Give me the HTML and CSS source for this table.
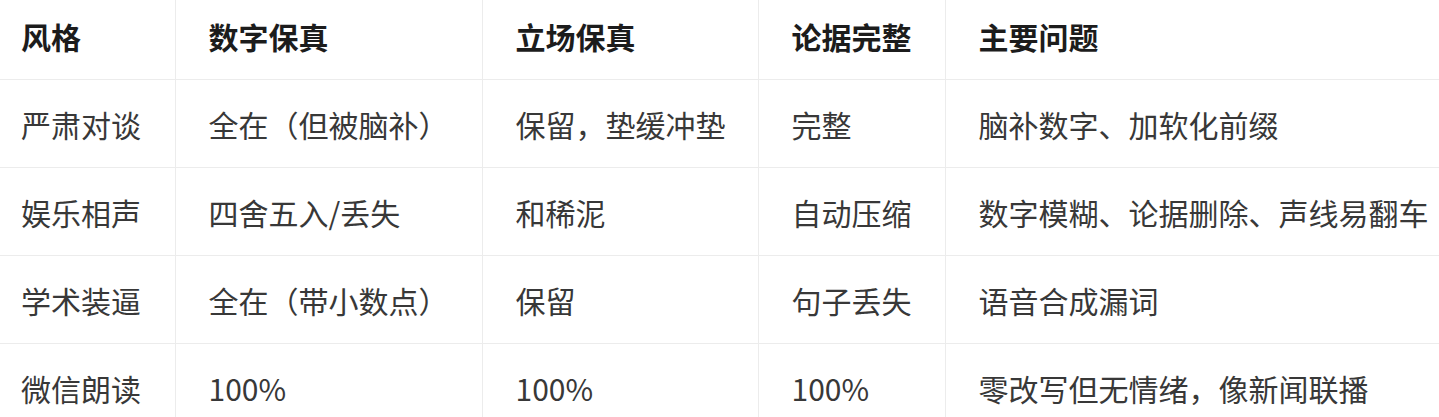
FILE: index.html
```html
<!DOCTYPE html>
<html lang="zh-CN">
<head>
<meta charset="utf-8">
<title>风格对比</title>
<link rel="stylesheet" href="styles.css">
</head>
<body>
<table class="cmp">
  <colgroup>
    <col class="c1"><col class="c2"><col class="c3"><col class="c4"><col class="c5">
  </colgroup>
  <thead>
    <tr><th>风格</th><th>数字保真</th><th>立场保真</th><th>论据完整</th><th>主要问题</th></tr>
  </thead>
  <tbody>
    <tr><td>严肃对谈</td><td>全在（但被脑补）</td><td>保留，垫缓冲垫</td><td>完整</td><td>脑补数字、加软化前缀</td></tr>
    <tr><td>娱乐相声</td><td>四舍五入/丢失</td><td>和稀泥</td><td>自动压缩</td><td>数字模糊、论据删除、声线易翻车</td></tr>
    <tr><td>学术装逼</td><td>全在（带小数点）</td><td>保留</td><td>句子丢失</td><td>语音合成漏词</td></tr>
    <tr><td>微信朗读</td><td>100%</td><td>100%</td><td>100%</td><td>零改写但无情绪，像新闻联播</td></tr>
  </tbody>
</table>
</body>
</html>
```

FILE: styles.css
```css
html, body {
  margin: 0;
  padding: 0;
  background: #ffffff;
}
body {
  overflow: hidden;
}
.cmp {
  width: 1439px;
  table-layout: fixed;
  border-collapse: collapse;
  font-family: "Noto Sans CJK SC", "Noto Sans", sans-serif;
  font-size: 30px;
  line-height: 40px;
  color: #383838;
}
.c1 { width: 175px; }
.c2 { width: 307px; }
.c3 { width: 276px; }
.c4 { width: 187px; }
.c5 { width: auto; }
.cmp th,
.cmp td {
  text-align: left;
  white-space: nowrap;
  padding: 24px 0 23px 33px;
  border-right: 1px solid #ececec;
  border-bottom: 1px solid #ececec;
  vertical-align: middle;
}
.cmp th:first-child,
.cmp td:first-child {
  padding-left: 21px;
}
.cmp th:last-child,
.cmp td:last-child {
  border-right: none;
}
.cmp th {
  padding-top: 16px;
  font-weight: 700;
  color: #1c1c1c;
}
```
